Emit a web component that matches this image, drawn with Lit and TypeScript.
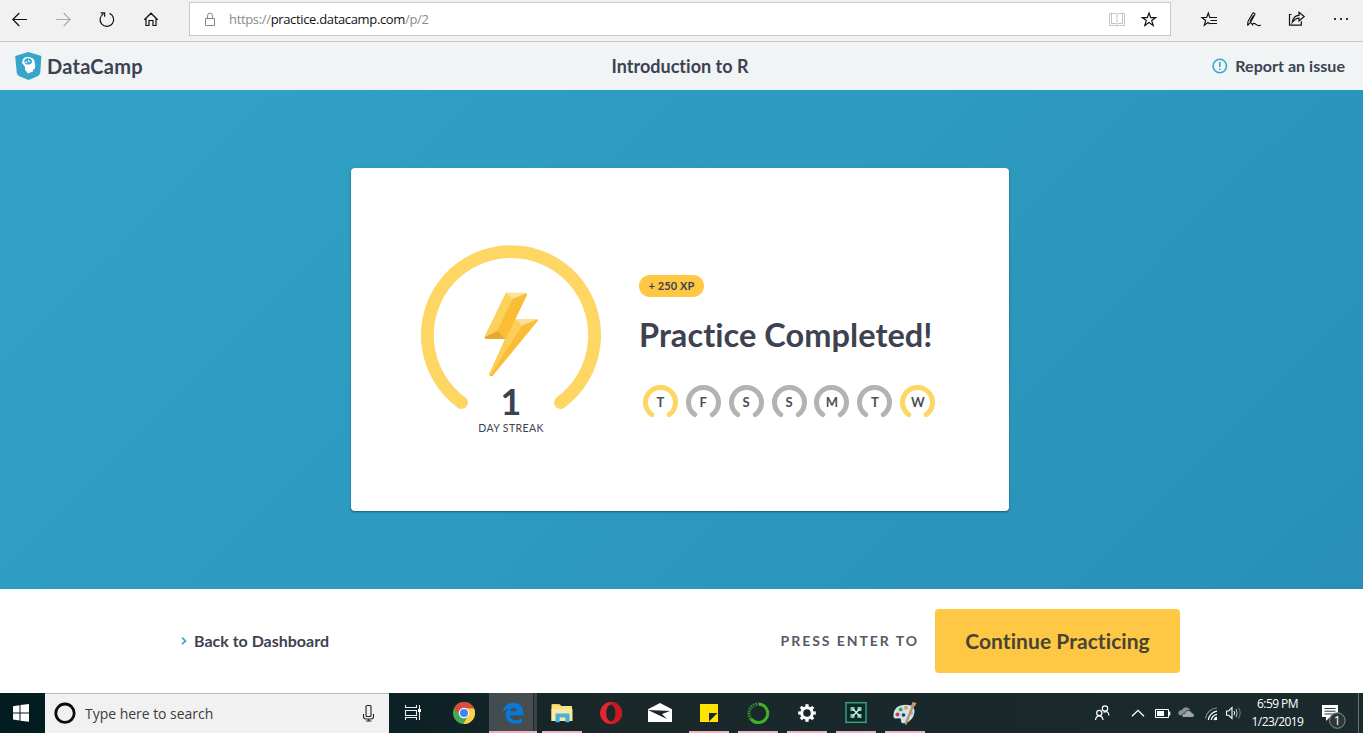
import { LitElement, html, svg, css } from "lit";
import { customElement } from "lit/decorators.js";

/* Each glyph is drawn on a shared page grid; the viewBox picks its cell. */
const icon = (x: number, y: number, w: number, h: number, body: unknown) =>
  html`<svg class="icon" width=${w} height=${h} viewBox="${x} ${y} ${w} ${h}" fill="none">${body}</svg>`;

const teeth = [0, 45, 90, 135, 180, 225, 270, 315];

@customElement("browser-bar")
class BrowserBar extends LitElement {
  static styles = css`
    :host { display: flex; height: 41px; background: #f1f1f1; border-bottom: 1px solid #c9c9c9; font-family: "Open Sans", "Noto Sans", sans-serif; }
    .icon { display: block; flex: none; }
    .nav, .tools { display: flex; flex: none; }
    .address { box-sizing: border-box; width: 982px; height: 34px; margin: 2px 16px 0; border: 1px solid #c8c8c8; background: #fff; display: flex; align-items: center; flex: none; }
    .url { flex: 1; margin-left: 0; font-size: 13px; line-height: 18px; letter-spacing: -0.34px; color: #8a8a8a; white-space: nowrap; }
    .host { color: #111; }
  `;
  render() {
    return html`
      <div class="nav">
        ${icon(0, 0, 41, 41, svg`<path d="M27 19.5H12.8M19.3 13L12.8 19.5L19.3 26" stroke="#111" stroke-width="1.2"/>`)}
        ${icon(41, 0, 44, 41, svg`<path d="M56 19.5H70.2M63.7 13L70.2 19.5L63.7 26" stroke="#aaa" stroke-width="1.1"/>`)}
        ${icon(85, 0, 44, 41, svg`<path d="M109.6 13.4A6.8 6.8 0 1 1 103.5 13.7M100.6 12.8H104.6V16.8" stroke="#111" stroke-width="1.2"/>`)}
        ${icon(129, 0, 44, 41, svg`<path d="M144.3 19.8L151 13.2L157.7 19.8M146 18.5V25.5H149V20.5H153V25.5H156V18.5" stroke="#111" stroke-width="1.2"/>`)}
      </div>
      <div class="address">
        ${icon(190, 3, 39, 32, svg`<path d="M205.5 18.5H214.5V25.5H205.5ZM207.5 18.5V15.8A2.5 2.7 0 0 1 212.5 15.8V18.5" stroke="#888"/>`)}
        <span class="url">https://<span class="host">practice.datacamp.com</span>/p/2</span>
        ${icon(1100, 3, 34, 32, svg`<path d="M1109.5 13.5H1115.5L1117 14.5L1118.5 13.5H1124.5V25.5H1118.5L1117 26L1115.5 25.5H1109.5ZM1117 14.5V26M1111.5 12.5V23.5H1116M1122.5 12.5V23.5H1118" stroke="#c4c4c4"/>`)}
        ${icon(1134, 3, 36, 32, svg`<path d="M1149 13L1150.7 17.6H1155.7L1151.7 20.6L1153.2 25.4L1149 22.5L1144.8 25.4L1146.3 20.6L1142.3 17.6H1147.3Z" stroke="#111" stroke-width="1.2"/>`)}
      </div>
      <div class="tools">
        ${icon(1187, 0, 44, 41, svg`<path d="M1211.5 17.5H1209.8L1208.3 13L1206.6 17.5H1202L1205.6 20.5L1204.3 25.2L1208 22.5L1210 24M1209.5 17.5H1217M1210.5 20.5H1217M1210 23.5H1217" stroke="#111" stroke-width="1.2"/>`)}
        ${icon(1231, 0, 44, 41, svg`<path d="M1247.5 25.5L1248 21.5L1252.5 13.5Q1254.2 12 1255 14.2L1250.5 22.5L1247.5 25.5M1250 21.5L1253.5 15.2M1250.5 22.5L1253.2 25.5M1252.3 24.2C1255.5 20.8 1256.3 28 1260.8 25" stroke="#111" stroke-width="1.1"/>`)}
        ${icon(1275, 0, 44, 41, svg`<path d="M1291.5 14.5H1289.5V25.2H1301.3V21.3M1292.2 22.5C1292.8 18.5 1294.8 15.3 1299 15.3V12.3L1304.2 16.5L1299 21V18C1295.5 18 1294.2 20 1292.2 22.5Z" stroke="#111" stroke-width="1.2"/>`)}
        ${icon(1319, 0, 44, 41, svg`<path d="M1334 18h2v2h-2zM1340 18h2v2h-2zM1346 18h2v2h-2z" fill="#333"/>`)}
      </div>
    `;
  }
}

@customElement("course-header")
class CourseHeader extends LitElement {
  static styles = css`
    :host { display: grid; grid-template-columns: 1fr auto 1fr; align-items: center; height: 48px; box-sizing: border-box; padding: 0 18px 0 15px; background: #f0f4f5; color: #3d4251; font-family: Lato, sans-serif; font-weight: 700; font-variant-ligatures: none; }
    .icon { display: block; flex: none; }
    .brand { display: flex; align-items: center; font-size: 20px; gap: 5px; letter-spacing: 0.25px; }
    .title { font-size: 18px; letter-spacing: 0.02px; }
    .report { display: flex; justify-content: flex-end; align-items: center; gap: 7px; font-size: 16px; letter-spacing: 0.04px; }
    .report span { padding-bottom: 2px; }
  `;
  render() {
    return html`
      <div class="brand">
        ${icon(15, 52, 27, 28, svg`
          <path d="M28.3 52L41.4 56L40.3 72.5Q39.8 75 37.5 76.2L28.5 80L19.3 76.2Q17 75 16.7 72.5L15.2 56Z" fill="#36a5c9"/>
          <path d="M28.3 57C25 56.6 22.7 58.3 22.5 61C21.6 61.7 21.8 63.2 22.8 63.7C23.4 65.3 25 65.8 25 67.4V69.7L28 73.4L33.3 71.3L33.1 69.3L35 68.9L34.8 66.7L35.4 65.9C34.6 60.5 34.6 57.6 28.3 57Z" fill="#fff"/>
          <path d="M25.2 59.5Q26 58 28 58.3Q30.8 58 31.7 60.2Q33 62.2 31 63.5Q29.8 65.2 28.2 64.2Q25.7 65.2 25 63Q23.3 61 25.2 59.5Z" fill="#36a5c9"/>
          <path d="M28.5 59.5V61.5H30.3M26 61V62.6H27.5" stroke="#fff" stroke-width=".9"/>`)}
        <span>DataCamp</span>
      </div>
      <span class="title">Introduction to R</span>
      <div class="report">
        ${icon(1212, 58, 16, 16, svg`<circle cx="1219.8" cy="66" r="6.7" stroke="#3ba8cb" stroke-width="1.6"/><path d="M1219.8 62V67.1M1219.8 68.5V70.1" stroke="#3ba8cb" stroke-width="1.6"/>`)}
        <span>Report an issue</span>
      </div>
    `;
  }
}

@customElement("streak-card")
class StreakCard extends LitElement {
  static styles = css`
    :host { box-sizing: border-box; width: 658px; height: 343px; padding-left: 70px; background: #fff; border-radius: 4px; box-shadow: 0 1px 2px rgba(0, 30, 50, 0.5); display: flex; color: #3d4251; font-family: Lato, sans-serif; font-variant-ligatures: none; }
    .icon { display: block; }
    .streak { width: 180px; padding-top: 77px; display: flex; flex-direction: column; align-items: center; }
    .count { font-size: 36px; line-height: 40px; font-weight: 700; margin-top: -30px; }
    .caption { font-size: 10.5px; line-height: 14px; letter-spacing: 0.4px; margin-top: 0; }
    .summary { margin-left: 38px; padding-top: 107px; }
    .xp { width: 65px; height: 22px; border-radius: 11px; background: #ffc844; display: flex; align-items: center; justify-content: center; font-size: 11px; font-weight: 700; line-height: 20px; letter-spacing: 0.1px; padding-bottom: 1px; box-sizing: border-box; }
    .headline { margin: 17px 0 0; font-size: 32.5px; line-height: 42px; font-weight: 700; letter-spacing: 0.05px; white-space: nowrap; }
    .days { display: flex; gap: 7.9px; margin: 29px 0 0 3.9px; }
    .day { display: grid; width: 35px; height: 35px; place-items: center; font-size: 13px; font-weight: 700; color: #4a4e57; }
    .day > * { grid-area: 1 / 1; }
    .day > span { margin-bottom: 2px; }
  `;
  private days = [["T", true], ["F", false], ["S", false], ["S", false], ["M", false], ["T", false], ["W", true]] as [string, boolean][];
  render() {
    return html`
      <div class="streak">
        ${icon(421, 245, 180, 166, svg`
          <path d="M461.5 402.5A83.6 83.6 0 1 1 560.5 402.5" stroke="#fdd663" stroke-width="12.8" stroke-linecap="round"/>
          <g transform="translate(400 230) scale(.33333)">
            <path d="M318 188L255 318Q252 327 260 327H315L268 432Q268 442 277 438L413 273Q415 267 407 267H346L381 196Q383 189 376 189Z" fill="#fbc33a"/>
            <path d="M318 188L338 207L292 303L254 322Z" fill="#fdd25c"/>
            <path d="M318 188L379 189L338 207Z" fill="#f8e3a2"/>
            <path d="M338 207L381 192L346 267L315 327L292 303Z" fill="#fabd35"/>
            <path d="M292 303L315 327H257L254 322Z" fill="#e2aa35"/>
            <path d="M346 267L366 287L270 438L267 433Z" fill="#fdcf58"/>
            <path d="M346 267H413L366 287Z" fill="#f8dfa0"/>
            <path d="M366 287L414 269L277 438L270 438Z" fill="#fabd35"/>
          </g>`)}
        <div class="count">1</div>
        <div class="caption">DAY STREAK</div>
      </div>
      <div class="summary">
        <div class="xp">+ 250 XP</div>
        <h1 class="headline">Practice Completed!</h1>
        <div class="days">
          ${this.days.map(([d, on]) => html`<div class="day">
            <svg class="icon" width="35" height="35" viewBox="0 0 35 35" fill="none"><path d="M8.7 29.6A15 15 0 1 1 26.3 29.6" stroke=${on ? "#fdd663" : "#b3b3b3"} stroke-width="5" stroke-linecap="round"/></svg>
            <span>${d}</span></div>`)}
        </div>
      </div>
    `;
  }
}

@customElement("practice-footer")
class PracticeFooter extends LitElement {
  static styles = css`
    :host { display: flex; align-items: center; box-sizing: border-box; height: 104px; padding: 0 183px 0 180px; background: #fff; color: #3d4251; font-family: Lato, sans-serif; font-weight: 700; font-variant-ligatures: none; }
    .icon { display: block; }
    .back { display: flex; align-items: center; gap: 6px; font-size: 16px; margin-right: auto; }
    .back span { padding-bottom: 2px; }
    .hint { font-size: 14px; letter-spacing: 1.95px; color: #565b66; margin-right: 16px; padding-bottom: 1px; }
    .go { width: 245px; height: 64px; border-radius: 4px; background: #ffc844; border: 0; padding: 0 0 2px; font: 700 21px Lato, sans-serif; letter-spacing: 0.06px; font-variant-ligatures: none; color: #474435; }
  `;
  render() {
    return html`
      <div class="back">
        ${icon(180, 635, 8, 12, svg`<path d="M182 637.7L185.5 640.9L182 644.2" stroke="#36a5c9" stroke-width="1.6"/>`)}
        <span>Back to Dashboard</span>
      </div>
      <span class="hint">PRESS ENTER TO</span>
      <button class="go">Continue Practicing</button>
    `;
  }
}

@customElement("task-bar")
class TaskBar extends LitElement {
  static styles = css`
    :host { display: flex; height: 40px; background: linear-gradient(90deg, #021c20 0, #0c2125 30%, #1b282a 45%, #18282b 65%, #1b2a2c 100%); color: #fff; font-family: "Open Sans", "Noto Sans", sans-serif; }
    .icon { display: block; flex: none; }
    .search { box-sizing: border-box; width: 344px; border-top: 1px solid #b6baba; background: #f1f1f1; display: flex; align-items: center; color: #3c3c3c; flex: none; }
    .query { flex: 1; font-size: 14px; letter-spacing: -0.03px; line-height: 20px; }
    .app { width: 49px; height: 40px; flex: none; display: flex; flex-direction: column; align-items: center; }
    .running::after { content: ""; width: 40px; height: 2px; background: #f4afc8; margin-top: -2px; }
    .active { background: linear-gradient(90deg, transparent 1px, #424b4d 1px, #464e50 45px, #20292b 45px, #20292b 46px, #394143 46px); }
    .active::after { width: 48px; align-self: flex-end; }
    .tray { margin-left: auto; display: flex; }
    .clock { width: 66px; display: flex; flex-direction: column; align-items: center; font-size: 12px; line-height: 18px; letter-spacing: -0.55px; padding: 2px 1px 0 0; box-sizing: border-box; }
    .badge { font: 12px "Open Sans", sans-serif; fill: #fff; }
  `;
  private app(x: number, state: string, body: unknown) {
    return html`<div class="app ${state}">${icon(x, 693, 49, 40, body)}</div>`;
  }
  render() {
    return html`
      ${icon(0, 693, 45, 40, svg`<path d="M13 706.2L19.5 705.3V712.4H13ZM20.5 705.1L29 704V712.4H20.5ZM13 713.4H19.5V720.5L13 719.6ZM20.5 713.4H29V721.8L20.5 720.7Z" fill="#fff"/>`)}
      <div class="search">
        ${icon(45, 693, 40, 39, svg`<circle cx="65" cy="712.2" r="9.2" stroke="#0b0b0b" stroke-width="2.8"/>`)}
        <span class="query">Type here to search</span>
        ${icon(349, 693, 40, 39, svg`<rect x="366" y="704.5" width="5" height="11" rx="1" stroke="#222" stroke-width="1.1"/><path d="M363.5 713V715.5Q363.5 718 366 718H371Q373.5 718 373.5 715.5V713M368.5 718V720M366 720H371.5" stroke="#222" stroke-width="1.1"/>`)}
      </div>
      ${icon(389, 693, 50, 40, svg`<path d="M405.5 705V707.5H416.5V705M405.5 720V717.5H416.5V720M405.5 710.5H416.5V715.5H405.5ZM419.5 705V720" stroke="#eee" stroke-width="1.1"/><path d="M418 709h3v3h-3z" fill="#fff"/>`)}
      ${this.app(439, "", svg`
        <circle cx="464" cy="713" r="11" fill="#4ba654"/>
        <path d="M464 708.3H474A11 11 0 0 1 463.4 724L468.3 715.5Z" fill="#fdcf41"/>
        <path d="M454.2 708A11 11 0 0 1 474 708.3H464L459.5 714.5Z" fill="#dc4b3e"/>
        <circle cx="464" cy="713" r="5.3" fill="#fff"/><circle cx="464" cy="713" r="4.1" fill="#4285f4"/>`)}
      ${this.app(488, "running active", svg`
        <path d="M503 712.5C503.5 706.5 507.5 702.8 513.3 702.8C520 702.8 523.3 707.5 523.3 712.8V715.2H510C510.3 720.7 518 721.3 522 718.5V722.3C514.5 726 505.6 722.7 505.6 715.2C505.6 711.8 507.8 709.6 510.3 708.7C507 708.9 504.8 710.3 503 712.5ZM510.2 711.2H517C517 706.7 510.5 706.8 510.2 711.2Z" fill="#0a78d7" fill-rule="evenodd"/>`)}
      ${this.app(537, "running", svg`
        <path d="M551.5 704.5H560L561.3 706H572V721H551.5Z" fill="#f9df87"/><path d="M552 704H559.5V705.5H552Z" fill="#f1c94b"/>
        <path d="M551.5 709H572.5V721H551.5Z" fill="#fde99d"/>
        <path d="M555.5 713.5H569.5V722.3H565.3V717.5H559.7V722.3H555.5Z" fill="#45b2dd"/>`)}
      ${this.app(586, "", svg`
        <path fill-rule="evenodd" d="M611 702A11 11 0 1 1 611 724A11 11 0 1 1 611 702ZM611 704.8C608 704.8 606.3 708.6 606.3 713S608 721.2 611 721.2S615.7 717.4 615.7 713S614 704.8 611 704.8Z" fill="#e5262f"/>
        <path d="M613.5 702.3A11 11 0 0 1 613.5 723.7C611.5 723.9 610 722.5 609 720.8C612.5 722.3 615.7 719 615.7 713S612.5 703.7 609 705.2C610 703.5 611.5 702.1 613.5 702.3Z" fill="#c8191f"/>`)}
      ${this.app(635, "", svg`
        <path d="M648 709.3L660 703L672 709.3V722H648Z" fill="#fff"/><path d="M648 710L670 711L662 714L667 719L659 715.3Z" fill="#182629"/>`)}
      ${this.app(684, "running", svg`<path d="M700 704H718V722H700Z" fill="#ffe500"/><path d="M709 713H717.5L709 721.5Z" fill="#1b282a"/>`)}
      ${this.app(733, "running", svg`
        <path d="M758.5 704A9.3 9.3 0 1 1 751 719" stroke="#43b02a" stroke-width="3"/>
        <path d="M751 719A9.3 9.3 0 0 1 758.5 704" stroke="#358f2d" stroke-width="3.4" stroke-dasharray="1.6 .9"/>
        <path d="M751 717A9 9 0 0 1 755 705" stroke="#17262a" stroke-width=".8" stroke-dasharray="1 1.2"/>`)}
      ${this.app(782, "running", svg`
        <circle cx="807" cy="713" r="5.3" stroke="#fff" stroke-width="3"/>
        ${teeth.map((a) => svg`<path transform="rotate(${a} 807 713)" d="M805.4 704.2H808.6V708H805.4Z" fill="#fff"/>`)}`)}
      ${this.app(831, "running", svg`
        <rect x="846" y="702.7" width="20" height="19.6" fill="#0a2b26" stroke="#3f9c7d" stroke-width="1.5"/>
        <path d="M850.5 707H854.5V711H850.5ZM857.5 707H861.5V711H857.5ZM850.5 714H854.5V718H850.5ZM857.5 714H861.5V718H857.5Z" fill="#7fc9ab"/>
        <path d="M853 709L859.5 716M859.5 709L853 716" stroke="#e3f7ee" stroke-width="1.2"/>`)}
      ${this.app(880, "running", svg`
        <path d="M893.5 717C893 708 898.5 704.7 906 704.7C912 704.7 915 707.5 914.5 712C914 718.7 908 723.5 903 723.3C899.5 723 902.5 719.5 900 718.5C897.5 717.5 895 720 893.5 717Z" fill="#c9e2f2"/>
        <circle cx="897.5" cy="714.5" r="2" fill="#d53a35"/><circle cx="900.7" cy="709.5" r="2" fill="#45a64a"/><circle cx="906" cy="707.7" r="2" fill="#ef9b36"/><circle cx="911" cy="713" r="2" fill="#8fb6da"/>
        <circle cx="903.5" cy="715" r="1.8" fill="#263c48"/>
        <path d="M905.5 724.5L912.6 706.5" stroke="#c98d53" stroke-width="2.2"/><path d="M911 706L912.5 702L916.7 703L914 707.3Z" fill="#c59970"/>`)}
      <div class="tray">
        ${icon(1084, 693, 40, 40, svg`<circle cx="1105" cy="708.5" r="2.7" stroke="#fff" stroke-width="1.2"/><circle cx="1099.3" cy="713" r="2.6" stroke="#fff" stroke-width="1.2"/><path d="M1095.5 720Q1096 715.8 1099.3 715.8T1103 720M1103.5 712.3Q1108.5 710 1109 715.5" stroke="#fff" stroke-width="1.2"/>`)}
        ${icon(1124, 693, 27, 40, svg`<path d="M1132 716.3L1138 710.3L1144 716.3" stroke="#fff" stroke-width="1.3"/>`)}
        ${icon(1151, 693, 24, 40, svg`<path d="M1155.5 709.5H1168.5V717.5H1155.5Z" stroke="#fff"/><path d="M1157 711H1164V716H1157ZM1169 711.5H1170.3V715.5H1169Z" fill="#fff"/>`)}
        ${icon(1175, 693, 24, 40, svg`<path d="M1181 715.5Q1177.5 715 1178.5 712Q1179.5 709.8 1182 710Q1183.5 706.7 1187 707.5Q1189.3 708 1190.5 710.2Q1186 709.5 1184.7 713Q1182.3 713 1181 715.5Z" fill="#8b9091"/><path d="M1184 717Q1181.5 716.5 1182.5 714.8Q1183.2 713.5 1185 713.8Q1185.8 710.7 1188.7 710.8Q1191 711 1191.8 713.3Q1194 713.3 1194 715.3Q1194 717 1192.3 717Z" fill="#a3a7a8"/>`)}
        ${icon(1199, 693, 23, 40, svg`<path d="M1205.5 718.5A12 12 0 0 1 1217 708" stroke="#8a9293" stroke-width="1.2"/><path d="M1208.3 720A10 10 0 0 1 1217 711.2M1211.2 720A7 7 0 0 1 1217 714.4M1214 720A4 4 0 0 1 1217 717.2" stroke="#fff" stroke-width="1.2"/><circle cx="1216" cy="719" r="1.2" fill="#fff"/>`)}
        ${icon(1222, 693, 23, 40, svg`<path d="M1226.5 711H1228.7L1232 707.7V718.5L1228.7 715.3H1226.5Z" stroke="#fff" stroke-width="1.1"/><path d="M1234 711Q1235.3 713 1234 715.2" stroke="#fff"/><path d="M1236 709Q1238.3 713 1236 717.2" stroke="#c8cbcb"/><path d="M1238.3 707.5Q1242 713 1238.3 718.7" stroke="#788082"/>`)}
        <div class="clock"><span>6:59 PM</span><span>1/23/2019</span></div>
        ${icon(1311, 693, 52, 40, svg`
          <path d="M1322 705H1338V717H1330L1326 721V717H1322Z" fill="#fff"/><path d="M1324.5 708.5H1335.5M1324.5 711.2H1335.5M1324.5 714H1335.5" stroke="#26393c" stroke-width="1"/>
          <circle cx="1337.3" cy="720.5" r="7.8" fill="#2b3739" stroke="#8b9192" stroke-width="1"/>
          <text class="badge" x="1333.8" y="725">1</text>
          <path d="M1358.5 693V733" stroke="#687375"/>`)}
      </div>
    `;
  }
}

@customElement("app-root")
class AppRoot extends LitElement {
  static styles = css`
    :host { display: flex; flex-direction: column; width: 1363px; height: 733px; overflow: hidden; background: #fff; }
    .hero { flex: none; box-sizing: border-box; height: 499px; padding: 78px 0 0 351px; background: linear-gradient(135deg, #31a2c6 0%, #2d9ac0 50%, #2890b7 100%); }
  `;
  render() {
    return html`
      <browser-bar></browser-bar>
      <course-header></course-header>
      <div class="hero"><streak-card></streak-card></div>
      <practice-footer></practice-footer>
      <task-bar></task-bar>
    `;
  }
}
